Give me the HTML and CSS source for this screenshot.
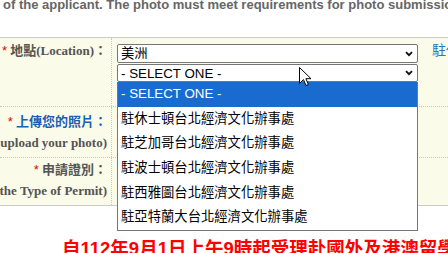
FILE: index.html
```html
<!DOCTYPE html>
<html lang="zh-Hant">
<head>
  <meta charset="UTF-8" />
  <meta name="viewport" content="width=device-width, initial-scale=1.0" />
  <title>線上申請</title>
  <link rel="stylesheet" href="styles.css">
</head>
<body>
  <p class="note">of the applicant. The photo must meet requirements for photo submission.</p>

  <div class="form">
    <div class="row row-location">
      <div class="label">
        <span class="line"><span class="req">*</span> 地點(Location)：</span>
      </div>
      <div class="field">
        <div class="selects">
          <div class="select">美洲
            <svg width="8" height="6" viewBox="0 0 8 6"><path d="M1 1.2l3 3 3-3" fill="none" stroke="#111" stroke-width="1.9"/></svg>
          </div>
          <div class="select select-open">- SELECT ONE -
            <svg width="8" height="6" viewBox="0 0 8 6"><path d="M1 1.2l3 3 3-3" fill="none" stroke="#111" stroke-width="1.9"/></svg>
          </div>
          <ul class="dropdown">
            <li class="active">- SELECT ONE -</li>
            <li>駐休士頓台北經濟文化辦事處</li>
            <li>駐芝加哥台北經濟文化辦事處</li>
            <li>駐波士頓台北經濟文化辦事處</li>
            <li>駐西雅圖台北經濟文化辦事處</li>
            <li>駐亞特蘭大台北經濟文化辦事處</li>
          </ul>
          <svg class="cursor" width="13" height="20" viewBox="0 0 13 20">
            <path d="M0.5 0.5V16.5L4.5 12.6L7 18.5L9.4 17.5L6.9 11.7H12Z" fill="#fff" stroke="#000" stroke-width="1" stroke-linejoin="round"/>
          </svg>
        </div>
        <a class="office" href="#">駐休士頓台北經濟文化辦事處</a>
      </div>
    </div>

    <div class="row row-photo">
      <div class="label">
        <span class="line blue"><span class="req">*</span> 上傳您的照片：</span>
        <span class="line">(Please upload your photo)</span>
      </div>
      <div class="field"></div>
    </div>

    <div class="row row-permit">
      <div class="label">
        <span class="line"><span class="req">*</span> 申請證別：</span>
        <span class="line">(Please Select the Type of Permit)</span>
      </div>
      <div class="field"></div>
    </div>
  </div>

  <p class="notice">自112年9月1日上午9時起受理赴國外及港澳留學生申請</p>
</body>
</html>
```

FILE: styles.css
```css
body {
  margin: 0;
  width: 448px;
  height: 253px;
  overflow: hidden;
  background: #fff;
  font-family: "Liberation Sans", "Noto Sans CJK TC", sans-serif;
}
.note {
  margin: -3px 0 24px 3px;
  font: bold 13px/16px "Liberation Sans", sans-serif;
  color: #666;
  white-space: nowrap;
}
.form {
  background: #fafbe8;
  border-top: 1px solid #ccc;
  border-bottom: 1px solid #ccc;
}
.row {
  display: flex;
  border-bottom: 1px dotted #c8c8c8;
}
.row:last-child {
  border-bottom: none;
}
.row-location {
  height: 68px;
}
.row-photo {
  height: 50px;
}
.row-permit {
  height: 47px;
}
.label {
  flex: none;
  width: 107px;
  padding-right: 4px;
  border-right: 1px dotted #c8c8c8;
  display: flex;
  flex-direction: column;
  align-items: flex-end;
  justify-content: center;
  font: bold 13px/21px "Liberation Serif", "Noto Sans CJK TC", serif;
  color: #555;
}
.row-location .label {
  justify-content: flex-start;
  padding-top: 2px;
}
.row-permit .label {
  padding-bottom: 4px;
}
.line {
  white-space: nowrap;
}
.line.blue {
  color: #1a5fb4;
}
.req {
  color: #e00;
  font: 13px "Liberation Sans", sans-serif;
}
.field {
  flex: 1;
  display: flex;
  align-items: flex-start;
  padding: 6px 0 0 5px;
}
.selects {
  position: relative;
  flex: none;
  width: 301px;
}
.select {
  height: 19px;
  box-sizing: border-box;
  border: 1px solid #767676;
  border-radius: 2px;
  background: #fff;
  display: flex;
  align-items: center;
  justify-content: space-between;
  padding: 0 4px 0 3px;
  font-size: 13.33px;
  line-height: 17px;
  color: #000;
}
.select + .select {
  margin-top: 1px;
  height: 18px;
}
.dropdown {
  position: absolute;
  top: 100%;
  left: 0;
  width: 301px;
  box-sizing: border-box;
  margin: 0;
  padding: 0;
  list-style: none;
  background: #fff;
  border: 1px solid #767676;
  border-top: none;
  z-index: 2;
}
.dropdown li {
  height: 24.7px;
  line-height: 24.7px;
  padding-left: 3px;
  font-size: 13.33px;
  color: #000;
  white-space: nowrap;
}
.dropdown li.active {
  background: #1a6bd0;
  color: #fff;
}
.cursor {
  position: absolute;
  left: 182px;
  top: 23px;
  z-index: 3;
}
.office {
  margin: -3px 0 0 14px;
  font-size: 14px;
  line-height: 19px;
  color: #2878c8;
  text-decoration: none;
  white-space: nowrap;
}
.notice {
  margin: 31px 0 0 62px;
  font: bold 18.5px/24px "Liberation Sans", "Noto Sans CJK TC", sans-serif;
  color: #f00;
  white-space: nowrap;
}
```
